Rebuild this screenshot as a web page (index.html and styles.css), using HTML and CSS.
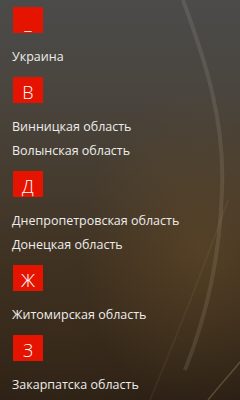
FILE: index.html
```html
<!DOCTYPE html>
<html lang="ru">
<head>
<meta charset="utf-8">
<link rel="stylesheet" href="styles.css">
</head>
<body>
<div class="screen">
  <svg class="streaks" width="240" height="400" viewBox="0 0 240 400">
    <path d="M183 0 C 205 60, 225 120, 222 190 C 220 260, 205 320, 185 370" fill="none" stroke="rgba(200,190,170,0.14)" stroke-width="4"/>
    <path d="M150 400 C 175 340, 210 250, 228 200" fill="none" stroke="rgba(200,170,120,0.08)" stroke-width="2"/>
    <path d="M208 400 C 220 385, 232 372, 240 362" fill="none" stroke="rgba(220,190,140,0.25)" stroke-width="1.5"/>
  </svg>
  <div class="list">
    <section class="group">
      <div class="tile"><span class="letter">_</span></div>
      <div class="item">Украина</div>
    </section>
    <section class="group">
      <div class="tile"><span class="letter">В</span></div>
      <div class="item">Винницкая область</div>
      <div class="item">Волынская область</div>
    </section>
    <section class="group">
      <div class="tile"><span class="letter">Д</span></div>
      <div class="item">Днепропетровская область</div>
      <div class="item">Донецкая область</div>
    </section>
    <section class="group">
      <div class="tile"><span class="letter">Ж</span></div>
      <div class="item">Житомирская область</div>
    </section>
    <section class="group">
      <div class="tile"><span class="letter">З</span></div>
      <div class="item">Закарпатска область</div>
    </section>
  </div>
</div>
</body>
</html>
```
FILE: styles.css
```css
html, body {
  margin: 0;
  padding: 0;
}
body {
  width: 240px;
  height: 400px;
  overflow: hidden;
  font-family: "Open Sans", "Noto Sans", sans-serif;
}
.screen {
  position: relative;
  width: 240px;
  height: 400px;
  overflow: hidden;
  background:
    radial-gradient(ellipse 120px 160px at 200px 250px, rgba(110,80,40,0.45), rgba(110,80,40,0) 100%),
    radial-gradient(ellipse 160px 120px at 60px 330px, rgba(70,50,30,0.35), rgba(70,50,30,0) 100%),
    linear-gradient(180deg, #4b4b4a 0px, #4a4640 80px, #463d31 170px, #3f3222 260px, #33271a 340px, #2b2015 400px);
}
.streaks {
  position: absolute;
  left: 0;
  top: 0;
}
.list {
  position: relative;
  display: flex;
  flex-direction: column;
  gap: 9px;
  padding: 7px 0 0 12px;
}
.group {
  display: flex;
  flex-direction: column;
}
.tile {
  width: 30px;
  height: 26px;
  margin-left: 1px;
  margin-bottom: 11px;
  background: #e51400;
  display: flex;
  align-items: center;
  justify-content: center;
}
.letter {
  color: #fff;
  font-size: 18px;
  font-weight: 300;
  line-height: 1;
  padding-top: 4px;
}
.item {
  height: 24px;
  line-height: 26px;
  color: #ededeb;
  font-size: 12.5px;
  white-space: nowrap;
}
```
